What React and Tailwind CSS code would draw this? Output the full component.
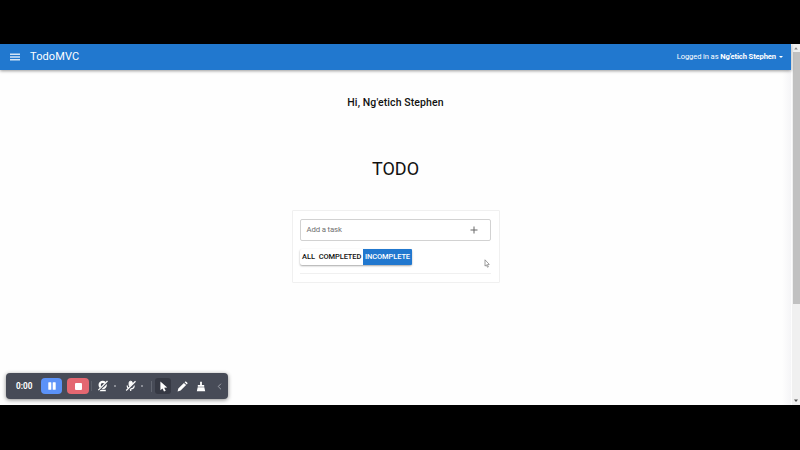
function Header() {
  return (
    <header className="relative flex h-[26px] w-[791px] shrink-0 items-center bg-[#2178cf] pl-[10px] pr-[8px] text-white shadow-[0_1px_3px_rgba(0,0,0,0.4)]">
      <svg className="h-[8px] w-[10px]" viewBox="0 0 10 8" fill="#fff">
        <rect y="0.6" width="10" height="1.2" />
        <rect y="3.4" width="10" height="1.2" />
        <rect y="6.2" width="10" height="1.2" />
      </svg>
      <h1 className="ml-[10px] pb-px text-[11px] leading-none tracking-[0.1px]">TodoMVC</h1>
      <button className="ml-auto flex items-center text-[7.6px] leading-none tracking-[-0.12px]">
        <span className="whitespace-pre">Logged in as </span>
        <span className="font-bold">Ng'etich Stephen</span>
        <svg className="ml-[3px] h-[2px] w-[4px]" viewBox="0 0 4 2" fill="#fff">
          <path d="M0 0h4L2 2z" />
        </svg>
      </button>
    </header>
  );
}

function TodoCard() {
  return (
    <section className="mt-[29px] h-[73px] w-[208px] rounded-[1px] border border-[#f0f0f0] bg-white pl-[7px] pt-[8px]">
      <div className="flex h-[22px] w-[191px] items-center justify-between rounded-[2px] border border-[#d2d2d2] pl-[6px] pr-[12px] text-[7.8px] tracking-[-0.15px] text-[#707070]">
        <span>Add a task</span>
        <svg className="h-[8px] w-[8px]" viewBox="0 0 8 8" stroke="#666" strokeWidth="1">
          <path d="M4 0.5v7M0.5 4h7" />
        </svg>
      </div>
      <div className="mt-[8px] flex h-[16px] w-[112px] rounded-[2px] text-[7.5px] font-medium leading-[16px] tracking-[-0.1px] text-[#111] shadow-[0_1px_2px_rgba(0,0,0,0.35)]">
        <button className="w-[17px] pl-px">ALL</button>
        <button className="w-[46px] pl-px">COMPLETED</button>
        <button className="w-[49px] rounded-r-[1px] bg-[#2178cf] pl-px text-white">INCOMPLETE</button>
      </div>
      <hr className="mt-[8px] w-[191px] border-[#f0f0f0]" />
    </section>
  );
}

function Scrollbar() {
  return (
    <div className="flex w-[8px] shrink-0 flex-col items-center bg-[#f0f0f0]">
      <svg className="h-[8px] w-[8px]" viewBox="0 0 8 8" fill="#888">
        <path d="M2.2 5.5h3.6L4 3.3z" />
      </svg>
      <div className="h-[252px] w-[7px] bg-[#c1c1c1]" />
      <svg className="mt-auto h-[9px] w-[8px]" viewBox="0 0 8 9" fill="#505050">
        <path d="M2 3.5h4L4 6z" />
      </svg>
    </div>
  );
}

function RecorderBar() {
  return (
    <div className="absolute left-[6px] top-[373px] flex h-[26px] w-[222px] items-center rounded-[4px] bg-[#474b57] pl-[10px] text-white shadow-[0_1px_4px_rgba(0,0,0,0.45)]">
      <span className="w-[25px] text-[8.2px] font-bold leading-none">0:00</span>
      <button className="flex h-[16px] w-[21px] items-center justify-center rounded-[4px] bg-[#5b92f8]">
        <svg className="h-[8px] w-[8px]" viewBox="0 0 8 8" fill="#fff">
          <rect x="0.3" y="0.3" width="3" height="7.4" rx="0.5" />
          <rect x="4.7" y="0.3" width="3" height="7.4" rx="0.5" />
        </svg>
      </button>
      <button className="ml-[5px] flex h-[16px] w-[22px] items-center justify-center rounded-[4px] bg-[#e46771]">
        <span className="h-[7px] w-[7px] rounded-[1px] bg-white" />
      </button>
      <span className="ml-[2px] h-[10px] w-px bg-[#5a5e69]" />
      <svg className="ml-[5px] h-[12px] w-[12px]" viewBox="0 0 12 12" fill="none" stroke="#fff">
        <circle cx="5.7" cy="5" r="3.1" strokeWidth="2.2" />
        <path d="M2.6 10.5h6.2" strokeWidth="1.5" />
        <path d="M1.5 10.5L11 1.5" stroke="#474b57" strokeWidth="2.2" />
        <path d="M1.3 10.2L10.5 1" strokeWidth="1.2" />
      </svg>
      <span className="ml-[5px] h-[2px] w-[2px] rounded-full bg-[#a0a3ab]" />
      <svg className="ml-[9px] h-[12px] w-[12px]" viewBox="0 0 12 12" fill="none" stroke="#fff">
        <rect x="4.1" y="1.2" width="3.2" height="5.4" rx="1.6" fill="#fff" />
        <path d="M2.2 5.5c0 4.5 7 4.5 7 0M5.7 8.8v2.2" strokeWidth="1.2" />
        <path d="M1.5 11L11 2" stroke="#474b57" strokeWidth="1.8" />
        <path d="M1.2 10.5L10.5 1.3" strokeWidth="1.2" />
      </svg>
      <span className="ml-[4px] h-[2px] w-[2px] rounded-full bg-[#a0a3ab]" />
      <span className="ml-[8px] h-[11px] w-px bg-[#626671]" />
      <button className="ml-[3px] flex h-[16px] w-[16px] items-center justify-center rounded-[3px] bg-[#363944]">
        <svg className="h-[11px] w-[9px]" viewBox="0 0 9 11" fill="#fff">
          <path d="M1.4 0.5v8.8l2.1-1.9 1.5 3.2 1.7-.8L5.2 6.8l3-.2z" />
        </svg>
      </button>
      <svg className="ml-[6px] h-[11px] w-[11px]" viewBox="0 0 11 11" fill="#fff">
        <path d="M0.6 10.4l.7-3L6.9 1.9l2.2 2.2-5.5 5.5zM7.6 1.2l.6-.6c.8-.7 2.9 1.3 2.2 2.2l-.6.6z" />
      </svg>
      <svg className="ml-[8px] h-[11px] w-[10px]" viewBox="0 0 10 11" fill="#fff">
        <path d="M4.1 0.8h1.8V4h2.3v1.8H1.8V4h2.3zM1.7 6.3h6.6l.9 4H.8z" />
      </svg>
      <svg className="ml-[11px] h-[7px] w-[5px]" viewBox="0 0 5 7" fill="none" stroke="#9b9ea7" strokeWidth="1">
        <path d="M4 0.7L1.2 3.5 4 6.3" />
      </svg>
    </div>
  );
}

export default function App() {
  return (
    <div className="relative h-[450px] w-[800px] overflow-hidden bg-black pt-[44px] pb-[45px] font-[Roboto,sans-serif]">
      <div className="flex h-[361px] bg-[#fdfdfd]">
        <div className="flex w-[792px] flex-col">
          <Header />
          <main className="flex w-[791px] flex-1 flex-col items-center bg-[linear-gradient(to_right,#fefefe_782px,#f5f5f7)] text-[#111]">
            <h2 className="mt-[26px] text-[10.5px] font-medium leading-[14px] tracking-[0.1px]">
              Hi, Ng'etich Stephen
            </h2>
            <h3 className="mt-[47px] text-[18px] leading-[24px]">TODO</h3>
            <TodoCard />
          </main>
        </div>
        <Scrollbar />
      </div>
      <RecorderBar />
      <svg
        className="absolute left-[484px] top-[259px] h-[9px] w-[6px]"
        viewBox="0 0 6 9"
        fill="#fff"
        stroke="#777"
        strokeWidth="0.7"
      >
        <path d="M1 0.8v6.3l1.4-1.2 1 2.3 1-.4-1-2.2 1.9-.2z" />
      </svg>
    </div>
  );
}
